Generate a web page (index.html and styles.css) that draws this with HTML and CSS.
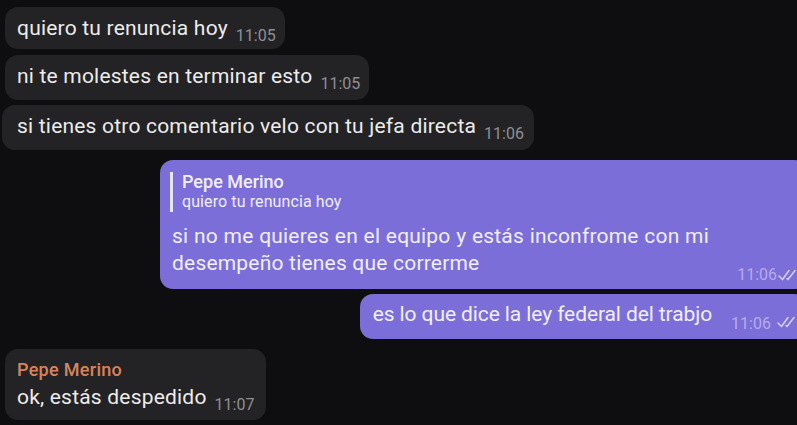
FILE: index.html
```html
<!DOCTYPE html>
<html lang="es">
<head>
  <meta charset="UTF-8" />
  <meta name="viewport" content="width=device-width, initial-scale=1.0"/>
  <title>Chat</title>
  <link rel="stylesheet" href="styles.css">
</head>
<body>

  <div class="chat">
    <!-- mensajes de ella -->
    <div class="msg in m1">
      <span class="text">quiero tu renuncia hoy</span><span class="time">11:05</span>
    </div>
    <div class="msg in m2">
      <span class="text">ni te molestes en terminar esto</span><span class="time">11:05</span>
    </div>
    <div class="msg in m3">
      <span class="text">si tienes otro comentario velo con tu jefa directa</span><span class="time">11:06</span>
    </div>

    <!-- respuestas -->
    <div class="msg out reply">
      <div class="quote">
        <div class="quote-name">Pepe Merino</div>
        <div class="quote-text">quiero tu renuncia hoy</div>
      </div>
      <div class="long-text">si no me quieres en el equipo y estás inconfrome con mi desempeño tienes que correrme</div>
      <div class="meta">
        <span class="time">11:06</span>
        <svg class="checks" width="22" height="13" viewBox="0 0 22 13"><path d="M1 8 L4.5 11.5 L11 2.5 M9 10.5 L10 11.5 L17 2.5" fill="none" stroke="currentColor" stroke-width="1.5" stroke-linecap="round" stroke-linejoin="round"/></svg>
      </div>
    </div>
    <div class="msg out short">
      <span class="text">es lo que dice la ley federal del trabjo</span><span class="time">11:06</span>
      <svg class="checks" width="22" height="13" viewBox="0 0 22 13"><path d="M1 8 L4.5 11.5 L11 2.5 M9 10.5 L10 11.5 L17 2.5" fill="none" stroke="currentColor" stroke-width="1.5" stroke-linecap="round" stroke-linejoin="round"/></svg>
    </div>

    <div class="msg in m4">
      <div class="name">Pepe Merino</div>
      <div class="line">
        <span class="text">ok, estás despedido</span><span class="time">11:07</span>
      </div>
    </div>
  </div>

</body>
</html>
```

FILE: styles.css
```css
* {
  box-sizing: border-box;
  margin: 0;
  padding: 0;
}

body {
  background: #0e0e10;
  font-family: Roboto, 'Noto Sans', sans-serif;
  color: #ececec;
  overflow: hidden;
  height: 425px;
}

.chat {
  display: flex;
  flex-direction: column;
  padding: 7px 0 0 5px;
}

.msg {
  border-radius: 13px;
  font-size: 21px;
  line-height: 24px;
  letter-spacing: 0.2px;
  white-space: nowrap;
}

.msg.in {
  background: #232325;
  align-self: flex-start;
  padding: 9px 9px 12px 12px;
}

.m1 {
  padding-bottom: 9px !important;
  margin-bottom: 6px;
}

.m2 {
  margin-bottom: 5px;
}

.m3 {
  margin-left: -3px;
  padding-left: 15px !important;
  padding-right: 10px !important;
}

.time {
  font-size: 16px;
  line-height: 16px;
  letter-spacing: 0;
  color: #8f8f93;
  margin-left: 8px;
  position: relative;
  top: 6px;
}

.msg.out {
  background: #7b6ed8;
  align-self: flex-end;
  margin-right: -10px;
  color: #f1efff;
}

.msg.out .time {
  color: #b4abef;
}

.checks {
  color: #d6d1f7;
  margin-left: 1px;
}

/* respuesta con cita */
.reply {
  margin-top: 10px;
  width: 647px;
  padding: 12px 0 6px 10px;
  white-space: normal;
}

.quote {
  border-left: 3px solid #e8e4fb;
  padding-left: 9px;
  line-height: 20px;
  letter-spacing: 0;
}

.quote-name {
  font-size: 18px;
  font-weight: 500;
}

.quote-text {
  font-size: 16px;
  letter-spacing: 0.1px;
}

.long-text {
  line-height: 27px;
  width: 537px;
  text-align: justify;
  margin: 11px 0 0 2px;
}

.meta {
  display: flex;
  justify-content: flex-end;
  align-items: center;
  height: 18px;
  margin-top: -12px;
  padding-right: 7px;
}

.meta .time {
  top: 1px;
  margin-left: 0;
}

.short {
  margin-top: 5px;
  padding: 8px 8px 13px 13px;
  letter-spacing: -0.1px;
}

.short .time {
  margin-left: 19px;
  top: 8px;
}

.short .checks {
  position: relative;
  top: 7px;
}

/* ultimo mensaje */
.m4 {
  margin-top: 10px;
  padding: 10px 12px 11px !important;
}

.name {
  color: #d9835a;
  font-size: 18px;
  font-weight: 500;
  line-height: 22px;
  letter-spacing: 0.3px;
  margin-bottom: 4px;
}
```
